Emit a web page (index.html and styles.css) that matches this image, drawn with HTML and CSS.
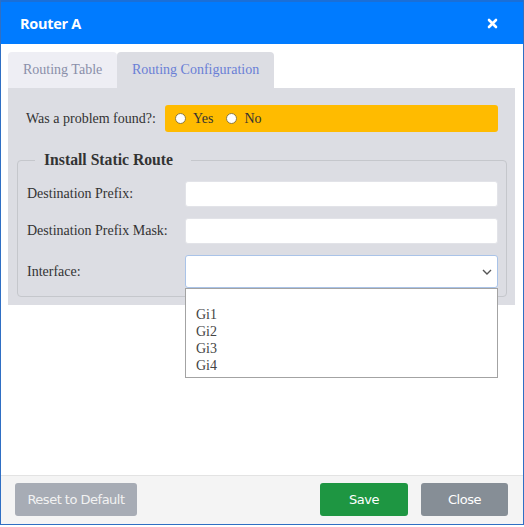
FILE: index.html
```html
<!DOCTYPE html>
<html>
<head>
<meta charset="utf-8">
<link rel="stylesheet" href="styles.css">
</head>
<body>
<div class="modal">
  <div class="modal-header">
    <span class="title">Router A</span>
    <svg class="close-x" width="11" height="11" viewBox="0 0 11 11"><path d="M2 2 L9 9 M9 2 L2 9" stroke="#fff" stroke-width="2.6" stroke-linecap="round"/></svg>
  </div>
  <div class="modal-body">
    <div class="tabs">
      <div class="tab">Routing Table</div>
      <div class="tab active">Routing Configuration</div>
    </div>
    <div class="panel">
      <div class="problem-row">
        <span class="problem-label">Was a problem found?:</span>
        <div class="problem-box">
          <span class="radio"></span><span class="radio-text">Yes</span>
          <span class="radio"></span><span class="radio-text">No</span>
        </div>
      </div>
      <fieldset class="route">
        <legend>Install Static Route</legend>
        <div class="form-row">
          <label>Destination Prefix:</label>
          <div class="input"></div>
        </div>
        <div class="form-row">
          <label>Destination Prefix Mask:</label>
          <div class="input"></div>
        </div>
        <div class="form-row select-row">
          <label>Interface:</label>
          <div class="select-wrap">
            <div class="select">
              <svg width="10" height="6" viewBox="0 0 10 6"><path d="M1 1 L5 5 L9 1" fill="none" stroke="#555" stroke-width="1.4"/></svg>
            </div>
            <div class="dropdown">
              <div class="opt">&nbsp;</div>
              <div class="opt">Gi1</div>
              <div class="opt">Gi2</div>
              <div class="opt">Gi3</div>
              <div class="opt">Gi4</div>
            </div>
          </div>
        </div>
      </fieldset>
    </div>
  </div>
  <div class="modal-footer">
    <button class="btn btn-reset">Reset to Default</button>
    <div class="spacer"></div>
    <button class="btn btn-save">Save</button>
    <button class="btn btn-close">Close</button>
  </div>
</div>
</body>
</html>
```

FILE: styles.css
```css
* { box-sizing: border-box; }
html, body { margin: 0; padding: 0; background: #ffffff; }
body { width: 524px; height: 527px; overflow: hidden; }

.modal {
  width: 524px;
  height: 525px;
  border: 1px solid #2f6fc4;
  border-top: 0;
  display: flex;
  flex-direction: column;
  background: #fff;
}

.modal-header {
  height: 44px;
  background: #007bff;
  border-top: 2px solid #1a6fd8;
  display: flex;
  align-items: center;
  justify-content: space-between;
  padding: 0 25px 0 19px;
}
.title {
  color: #fff;
  font-family: "Open Sans", sans-serif;
  font-weight: 700;
  font-size: 14.5px;
  letter-spacing: -0.3px;
}
.close-x { display: block; }

.modal-body {
  flex: 1;
  padding: 8px 8px 0 7px;
  font-family: "Liberation Serif", serif;
  font-size: 14px;
  color: #333;
}

.tabs { display: flex; height: 36px; }
.tab {
  padding: 0 0 0 15px;
  display: flex;
  align-items: center;
  white-space: nowrap;
  background: #eeeef4;
  color: #8a8fa9;
  border-radius: 4px 4px 0 0;
  font-size: 14px;
  width: 109px;
}
.tab.active {
  background: #dcdde3;
  color: #6a7fd6;
  width: 157px;
}

.panel {
  background: #dcdde3;
  padding: 17px 8px 8px 9px;
}

.problem-row {
  display: flex;
  align-items: center;
  height: 27px;
  padding-right: 9px;
}
.problem-label {
  width: 148px;
  padding-left: 9px;
  color: #333;
}
.problem-box {
  flex: 1;
  height: 27px;
  background: #ffbb00;
  border-radius: 3px;
  display: flex;
  align-items: center;
  padding-left: 10px;
}
.radio {
  width: 11px;
  height: 11px;
  border-radius: 50%;
  background: #fff;
  border: 1px solid #8d7a3e;
  margin-right: 7px;
}
.radio-text {
  margin-right: 13px;
  color: #333;
}

.route {
  margin: 19px 0 0 0;
  border: 1px solid #c5c7cc;
  border-radius: 4px;
  padding: 12px 8px 8px 9px;
  min-width: 0;
}
.route legend {
  font-weight: 700;
  font-size: 15.7px;
  padding: 0 18px 0 9px;
  margin-left: 8px;
  color: #333;
}

.form-row {
  display: flex;
  align-items: center;
  margin-bottom: 11px;
}
.form-row label {
  width: 158px;
  flex: none;
  color: #333;
}
.input {
  flex: 1;
  height: 26px;
  background: #fff;
  border: 1px solid #e2e3e8;
  border-radius: 3px;
}
.select-row { margin-bottom: 0; }
.select-wrap { flex: 1; position: relative; }
.select {
  height: 33px;
  background: #fff;
  border: 1px solid #a9c3e8;
  border-radius: 3px;
  display: flex;
  align-items: center;
  justify-content: flex-end;
  padding-right: 5px;
}
.dropdown {
  position: absolute;
  left: 0;
  right: 0;
  top: 33px;
  background: #fff;
  border: 1px solid #a3a3a3;
  padding: 0 0 3px 0;
  z-index: 2;
}
.opt {
  height: 17px;
  line-height: 17px;
  padding-left: 10px;
  color: #444;
  font-size: 14px;
}

.modal-footer {
  height: 49px;
  background: #f4f4f4;
  border-top: 1px solid #e3e3e3;
  display: flex;
  align-items: flex-start;
  padding: 7px 15px 0 14px;
}
.spacer { flex: 1; }
.btn {
  height: 33px;
  border: 0;
  border-radius: 3px;
  color: #fff;
  font-family: "DejaVu Sans", sans-serif;
  font-size: 13px;
  letter-spacing: -0.5px;
}
.btn-reset { width: 122px; background: #a7acb5; color: #f2f2f2; }
.btn-save { width: 88px; background: #1e9642; margin-right: 13px; }
.btn-close { width: 87px; background: #868e96; }
```
